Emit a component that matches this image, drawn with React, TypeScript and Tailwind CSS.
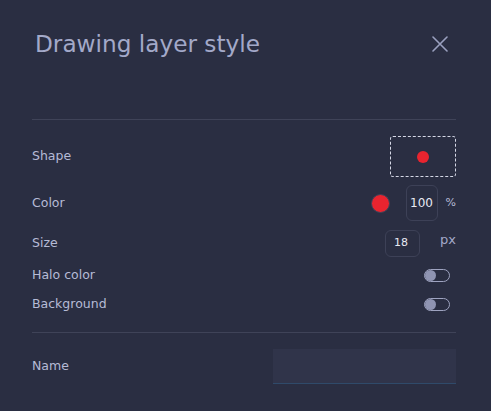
const FONT = { fontFamily: '"DejaVu Sans", "Noto Sans", sans-serif' }

function Toggle() {
  return (
    <span className="relative block w-[26px] h-[13px] rounded-full border border-[#9ea3c0]">
      <span className="absolute left-[0px] top-[0px] w-[11px] h-[11px] rounded-full bg-[#8f94b2]" />
    </span>
  )
}

export default function App() {
  return (
    <div className="w-[491px] h-[411px] bg-[#2a2e42] pl-8 pr-[35px] text-[#b6bbd6]" style={FONT}>
      <div className="h-[119px] pt-[28px]">
        <div className="flex items-center justify-between h-8">
          <h1 className="ml-[3px] text-[23.2px] leading-8 text-[#a3a9c9]">Drawing layer style</h1>
          <svg width="16" height="16" viewBox="0 0 16 16" className="mr-[8px] text-[#9aa0bf]">
            <path d="M1 1 L15 15 M15 1 L1 15" stroke="currentColor" strokeWidth="1.6" strokeLinecap="round" />
          </svg>
        </div>
      </div>

      <div className="h-px bg-[#3f4358]" />

      <div className="mt-4 flex items-center justify-between h-[41px]">
        <span className="text-[12.5px]">Shape</span>
        <div className="w-[66px] h-[41px] border border-dashed border-[#d5d8e6] rounded-[3px] flex items-center justify-center">
          <span className="w-3 h-3 rounded-full bg-[#e8242f]" />
        </div>
      </div>

      <div className="mt-2 flex items-center justify-between h-9">
        <span className="text-[12.5px]">Color</span>
        <div className="flex items-center">
          <span className="w-[19px] h-[19px] rounded-full bg-[#e8242f] border border-[#3f4358]" />
          <span className="ml-[16px] w-[32px] h-9 rounded-md border border-[#3d4157] flex items-center justify-center text-[12px] text-[#e8eaf2] font-medium">
            100
          </span>
          <span className="ml-[8px] text-[11px]">%</span>
        </div>
      </div>

      <div className="mt-[9px] flex items-center justify-between h-[27px]">
        <span className="text-[12.5px]">Size</span>
        <div className="flex items-start h-[27px]">
          <span className="w-[35px] h-[27px] rounded-md border border-[#3d4157] flex items-center pl-[8px] text-[11px] text-[#e8eaf2] font-medium">
            18
          </span>
          <span className="ml-[20px] mt-[2px] text-[13px] leading-4 text-[#a3a9c9]">px</span>
        </div>
      </div>

      <div className="mt-2 flex items-center justify-between h-5">
        <span className="text-[12.5px]">Halo color</span>
        <span className="mr-[6px]"><Toggle /></span>
      </div>

      <div className="mt-[9px] flex items-center justify-between h-5">
        <span className="text-[12.5px]">Background</span>
        <span className="mr-[6px]"><Toggle /></span>
      </div>

      <div className="mt-[18px] h-px bg-[#3f4358]" />

      <div className="mt-4 flex items-center justify-between h-[35px]">
        <span className="text-[12.5px]">Name</span>
        <div className="w-[183px] h-[35px] bg-[#30344a] border-b border-[#2f4a6a]" />
      </div>
    </div>
  )
}
